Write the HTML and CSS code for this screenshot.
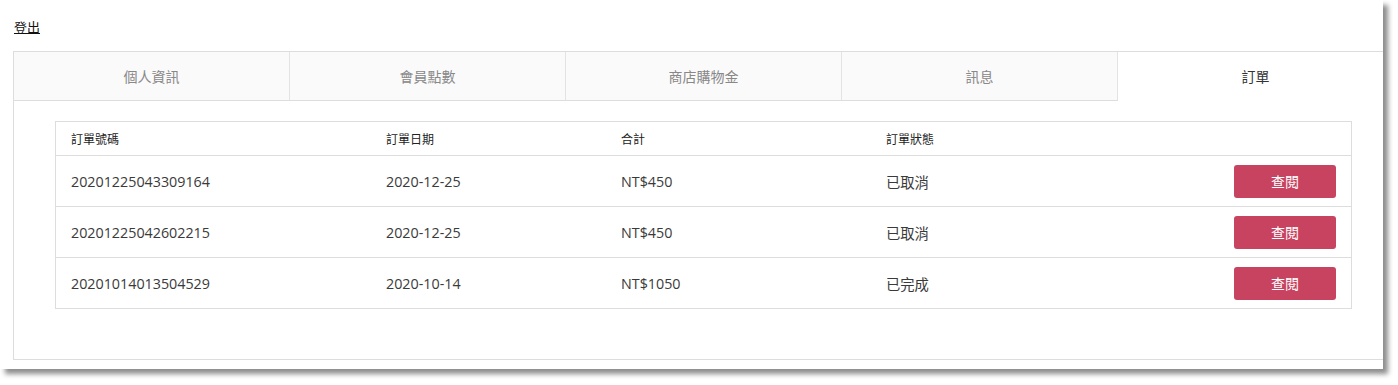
FILE: index.html
```html
<!DOCTYPE html>
<html lang="zh-Hant">
<head>
  <meta charset="UTF-8">
  <meta name="viewport" content="width=device-width, initial-scale=1.0">
  <title>會員中心 - 訂單</title>
  <link rel="stylesheet" href="styles.css">
</head>
<body>
  <div class="page">
    <div class="topbar">
      <a href="#" class="logout">登出</a>
    </div>

    <div class="member-box">
      <ul class="tabs">
        <li class="tab">個人資訊</li>
        <li class="tab">會員點數</li>
        <li class="tab">商店購物金</li>
        <li class="tab">訊息</li>
        <li class="tab active">訂單</li>
      </ul>

      <div class="tab-content">
        <table class="orders">
          <thead>
            <tr>
              <th class="col-no">訂單號碼</th>
              <th class="col-date">訂單日期</th>
              <th class="col-total">合計</th>
              <th class="col-status">訂單狀態</th>
              <th class="col-action"></th>
            </tr>
          </thead>
          <tbody>
            <tr>
              <td>20201225043309164</td>
              <td>2020-12-25</td>
              <td>NT$450</td>
              <td>已取消</td>
              <td class="action"><button class="btn-view">查閱</button></td>
            </tr>
            <tr>
              <td>20201225042602215</td>
              <td>2020-12-25</td>
              <td>NT$450</td>
              <td>已取消</td>
              <td class="action"><button class="btn-view">查閱</button></td>
            </tr>
            <tr>
              <td>20201014013504529</td>
              <td>2020-10-14</td>
              <td>NT$1050</td>
              <td>已完成</td>
              <td class="action"><button class="btn-view">查閱</button></td>
            </tr>
          </tbody>
        </table>
      </div>
    </div>
  </div>
</body>
</html>
```

FILE: styles.css
```css
body {
  margin: 0;
  padding: 0;
  height: 385px;
  background: #fff;
  font-family: 'Open Sans', 'Noto Sans CJK TC', sans-serif;
  color: #333;
}

.page {
  width: 1383px;
  height: 369px;
  background: #fff;
  overflow: hidden;
  box-shadow: 5px 5px 5px rgba(0, 0, 0, 0.45);
}

.topbar {
  height: 51px;
  padding-left: 14px;
  box-sizing: border-box;
  padding-top: 15px;
}

.logout {
  color: #111;
  font-size: 13px;
  text-decoration: underline;
}

.member-box {
  margin-left: 13px;
  width: 1381px;
  border: 1px solid #ddd;
  box-sizing: border-box;
}

.tabs {
  list-style: none;
  margin: 0;
  padding: 0;
  display: flex;
}

.tab {
  flex: 1;
  height: 48px;
  display: flex;
  align-items: center;
  justify-content: center;
  background: #fafafa;
  border-right: 1px solid #e3e3e3;
  border-bottom: 1px solid #ddd;
  color: #888;
  font-size: 14px;
}

.tab.active {
  background: #fff;
  border-right: none;
  border-bottom-color: transparent;
  color: #333;
}

.tab-content {
  padding: 20px 41px 50px 41px;
}

.orders {
  width: 1297px;
  border-collapse: collapse;
  border: 1px solid #ddd;
}

.orders th {
  height: 33px;
  text-align: left;
  font-size: 12px;
  font-weight: normal;
  color: #222;
  padding: 0 15px;
  border-bottom: 1px solid #ddd;
}

.col-no { width: 285px; }
.col-date { width: 205px; }
.col-total { width: 235px; }
.col-status { width: 217px; }

.orders td {
  height: 50px;
  padding: 0 15px;
  font-size: 14.3px;
  color: #3a3a3a;
  border-top: 1px solid #ddd;
}

.orders td.action {
  text-align: right;
}

.btn-view {
  width: 102px;
  height: 33px;
  background: #c8435f;
  color: #fff;
  border: none;
  border-radius: 3px;
  font-family: 'Open Sans', 'Noto Sans CJK TC', sans-serif;
  font-size: 14px;
  cursor: pointer;
  vertical-align: middle;
}
```
